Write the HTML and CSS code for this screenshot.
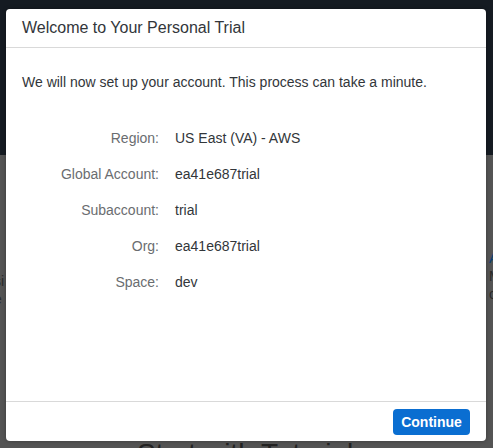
FILE: index.html
```html
<!DOCTYPE html>
<html>
<head>
<meta charset="utf-8">
<link rel="stylesheet" href="styles.css">
</head>
<body>
<div class="page">
  <div class="hero">
    <div class="hero-title">Welcome to SAP BTP Trial</div>
  </div>
  <div class="content">
    <div class="side side-left"><span>si</span><span>e</span></div>
    <div class="side side-right"><span class="link">A</span><span>M</span><span>c</span></div>
    <div class="tutorials">Start with Tutorials</div>
  </div>
  <div class="overlay">
    <div class="dialog">
      <div class="dialog-header">Welcome to Your Personal Trial</div>
      <div class="dialog-body">
        <p class="intro">We will now set up your account. This process can take a minute.</p>
        <div class="details">
          <div class="label">Region:</div><div class="value">US East (VA) - AWS</div>
          <div class="label">Global Account:</div><div class="value">ea41e687trial</div>
          <div class="label">Subaccount:</div><div class="value">trial</div>
          <div class="label">Org:</div><div class="value">ea41e687trial</div>
          <div class="label">Space:</div><div class="value">dev</div>
        </div>
      </div>
      <div class="dialog-footer">
        <button class="btn-primary">Continue</button>
      </div>
    </div>
  </div>
</div>
</body>
</html>
```
FILE: styles.css
```css
html, body {
  margin: 0;
  padding: 0;
}
body {
  font-family: "Liberation Sans", Arial, sans-serif;
  background: #545454;
  width: 493px;
  height: 448px;
  overflow: hidden;
}
.page {
  position: relative;
  width: 493px;
  height: 448px;
  display: flex;
  flex-direction: column;
}
.hero {
  height: 155px;
  background: #151b22;
  overflow: hidden;
  display: flex;
  justify-content: center;
}
.hero-title {
  font-size: 38px;
  color: #3d434a;
  margin-top: -33px;
  line-height: 40px;
  white-space: nowrap;
}
.content {
  flex: 1;
  position: relative;
  background: #545454;
}
.side {
  position: absolute;
  display: flex;
  flex-direction: column;
  font-size: 14px;
  line-height: 18px;
  color: #2a2a2a;
}
.side-left { left: -6px; top: 117px; }
.side-right { left: 489px; top: 94px; }
.side .link { color: #0a3f73; }
.tutorials {
  position: absolute;
  left: 137px;
  top: 283px;
  font-size: 28px;
  color: #222;
  white-space: nowrap;
}
.overlay {
  position: absolute;
  inset: 0;
  padding: 9px 7px 7px 6px;
  display: flex;
}
.dialog {
  width: 480px;
  height: 432px;
  background: #fff;
  border-radius: 4px;
  display: flex;
  flex-direction: column;
  overflow: hidden;
  box-shadow: 0 0 4px rgba(0,0,0,0.3);
}
.dialog-header {
  height: 39px;
  box-sizing: border-box;
  padding: 0 16px;
  display: flex;
  align-items: center;
  font-size: 16px;
  color: #32363a;
  border-bottom: 1px solid #d9d9d9;
  flex-shrink: 0;
}
.dialog-body {
  flex: 1;
  padding: 26px 16px 0;
}
.intro {
  margin: 0;
  font-size: 14px;
  line-height: 16px;
  color: #32363a;
}
.details {
  margin-top: 30px;
  display: grid;
  grid-template-columns: 137px 1fr;
  column-gap: 16px;
  grid-auto-rows: 36px;
  font-size: 14px;
}
.label {
  text-align: right;
  color: #6a6d70;
  display: flex;
  align-items: center;
  justify-content: flex-end;
}
.value {
  color: #32363a;
  display: flex;
  align-items: center;
}
.dialog-footer {
  height: 40px;
  box-sizing: border-box;
  border-top: 1px solid #d9d9d9;
  display: flex;
  align-items: center;
  justify-content: flex-end;
  padding: 0 16px 0 0;
  flex-shrink: 0;
}
.btn-primary {
  width: 77px;
  height: 26px;
  background: #0a6ed1;
  color: #fff;
  border: none;
  border-radius: 4px;
  font-family: "Liberation Sans", Arial, sans-serif;
  font-weight: bold;
  font-size: 14px;
  padding: 0;
}
```
